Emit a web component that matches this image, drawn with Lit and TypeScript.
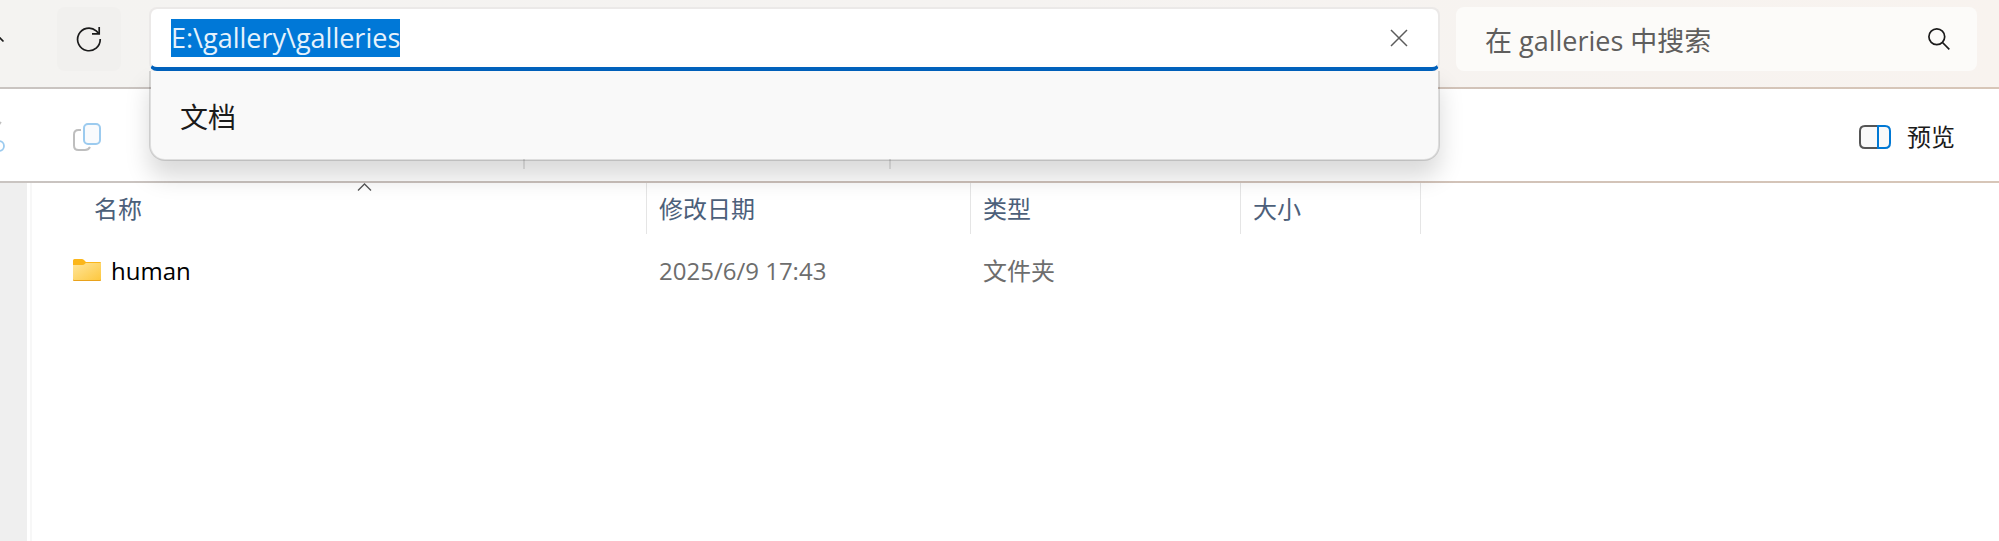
import { LitElement, html, css } from "lit";
import { customElement, property, query } from "lit/decorators.js";

interface FileEntry {
  name: string;
  modified: string;
  type: string;
  size: string;
}

const baseStyles = css`
  * {
    box-sizing: border-box;
  }
  button,
  input {
    font: inherit;
    color: inherit;
    border: 0;
    margin: 0;
    padding: 0;
    background: none;
  }
  svg {
    display: block;
    flex: none;
  }
`;

@customElement("address-box")
class AddressBox extends LitElement {
  @property() path = "";
  @property({ attribute: false }) suggestions: string[] = [];
  @query("input") input!: HTMLInputElement;

  static styles = [
    baseStyles,
    css`
      :host {
        display: block;
        position: relative;
        height: 64px;
      }
      .field {
        display: flex;
        align-items: center;
        height: 64px;
        padding: 0 30px 0 20px;
        border: 2px solid #ebe9e8;
        border-bottom: 4px solid #0062bd;
        border-radius: 8px;
        background: #fff;
        background-clip: padding-box;
      }
      .field input {
        flex: 1;
        min-width: 0;
        height: 38px;
        outline: none;
        caret-color: transparent;
        color: #1b1b1b;
      }
      .field input::selection {
        background: #0078d7;
        color: #e6f2fc;
      }
      .clear {
        color: #5c5c5c;
      }
      .menu {
        position: absolute;
        top: 64px;
        left: 0;
        right: 0;
        margin: 0;
        padding: 0;
        list-style: none;
        background: #f9f9f9;
        background-clip: padding-box;
        border: 2px solid rgba(0, 0, 0, 0.13);
        border-top: 0;
        border-radius: 0 0 16px 16px;
        box-shadow: 0 16px 24px rgba(0, 0, 0, 0.15);
      }
      .menu button {
        display: block;
        width: 100%;
        height: 88px;
        padding: 4px 28px 0 29px;
        text-align: left;
        color: #1b1b1b;
        font-size: 28px;
      }
    `,
  ];

  firstUpdated() {
    this.input.focus();
    this.input.select();
  }

  private clear() {
    this.input.value = "";
    this.input.focus();
  }

  render() {
    return html`
      <div class="field">
        <input type="text" aria-label="地址" spellcheck="false" .value=${this.path} />
        <button class="clear" aria-label="清除" @click=${this.clear}>
          <svg width="18" height="18" viewBox="0 0 18 18" fill="none" stroke="currentColor" stroke-width="1.5">
            <path d="M1 1 17 17M17 1 1 17" />
          </svg>
        </button>
      </div>
      <ul class="menu">
        ${this.suggestions.map((s) => html`<li><button>${s}</button></li>`)}
      </ul>
    `;
  }
}

@customElement("file-list")
class FileList extends LitElement {
  @property({ attribute: false }) files: FileEntry[] = [];

  static styles = [
    baseStyles,
    css`
      :host {
        display: block;
        font-size: 24px;
        line-height: 32px;
      }
      table {
        table-layout: fixed;
        border-collapse: separate;
        border-spacing: 0;
        width: 1389px;
      }
      .name {
        width: 615px;
      }
      .date {
        width: 324px;
      }
      .type {
        width: 270px;
      }
      .size {
        width: 180px;
      }
      th {
        position: relative;
        height: 51px;
        padding: 0 12px;
        text-align: left;
        font-weight: inherit;
        color: #4c607a;
        border-right: 1px solid #e5e5e5;
      }
      th:first-child {
        padding-left: 62px;
      }
      .sort {
        position: absolute;
        top: 0;
        left: 325px;
      }
      td {
        height: 74px;
        padding: 0 12px;
        color: #6d6d6d;
      }
      td:first-child {
        padding-left: 41px;
      }
      .entry {
        display: flex;
        align-items: center;
        gap: 10px;
        color: #000;
      }
    `,
  ];

  render() {
    return html`
      <table>
        <thead>
          <tr>
            <th class="name" aria-sort="ascending">
              名称
              <svg class="sort" width="15" height="9" viewBox="0 0 15 9" fill="none" stroke="#555" stroke-width="1.3">
                <path d="M1 7.5 7.5 1 14 7.5" />
              </svg>
            </th>
            <th class="date">修改日期</th>
            <th class="type">类型</th>
            <th class="size">大小</th>
          </tr>
        </thead>
        <tbody>
          ${this.files.map(
            (f) => html`<tr>
              <td>
                <div class="entry">
                  <svg width="28" height="24" viewBox="0 0 28 24">
                    <defs>
                      <linearGradient id="front" x1="0" y1="0" x2="1" y2="1">
                        <stop offset="0" stop-color="#ffe59a" />
                        <stop offset="1" stop-color="#fdc73c" />
                      </linearGradient>
                    </defs>
                    <path d="M0 1.5Q0 0 1.5 0H9Q10.500 0 11.500 1.500L13 3H27Q28 3 28 4V8H0Z" fill="#fbb61a" />
                    <path d="M0 6H9.500Q10.800 6 11.800 5L12.800 4H28V20.800Q28 22 26.800 22H1.200Q0 22 0 20.800Z" fill="url(#front)" />
                    <path d="M0 20.500Q0 22 1.200 22H26.800Q28 22 28 20.500L27 21H1Z" fill="#e9a21c" />
                  </svg>
                  <span>${f.name}</span>
                </div>
              </td>
              <td>${f.modified}</td>
              <td>${f.type}</td>
              <td>${f.size}</td>
            </tr>`
          )}
        </tbody>
      </table>
    `;
  }
}

@customElement("app-root")
class AppRoot extends LitElement {
  static styles = [
    baseStyles,
    css`
      :host {
        display: flex;
        flex-direction: column;
        min-height: 100vh;
        overflow: hidden;
        background: #fff;
        color: #1b1b1b;
        font-family: "Open Sans", "Noto Sans CJK SC", sans-serif;
        font-size: 27px;
        line-height: 38px;
      }
      .top {
        position: relative;
        z-index: 1;
        display: flex;
        padding: 7px 22px 16px 0;
        background: linear-gradient(90deg, #f4f3f1, #f5f3f1 50%, #f8f3ef);
      }
      .rule {
        flex: none;
        height: 2px;
        background: linear-gradient(90deg, #c9c4c1, #cdc0b9 50%, #d7c6b8);
      }
      .up {
        display: flex;
        align-items: center;
        width: 57px;
      }
      .refresh {
        display: flex;
        align-items: center;
        justify-content: center;
        width: 64px;
        height: 64px;
        border-radius: 8px;
        background: #f1f0ee;
      }
      address-box {
        flex: 1;
        min-width: 0;
        margin: 0 16px 0 28px;
      }
      .search {
        display: flex;
        align-items: center;
        width: 521px;
        height: 64px;
        padding: 0 27px 0 29px;
        border-radius: 8px;
        background: #fcfbf9;
      }
      .search input {
        flex: 1;
        min-width: 0;
        height: 40px;
        padding-top: 2px;
        outline: none;
      }
      .search input::placeholder {
        color: #5f5e5d;
        opacity: 1;
      }
      .commands {
        display: flex;
        align-items: center;
        height: 92px;
        padding: 4px 44px 0 0;
        font-size: 24px;
      }
      .group {
        display: flex;
        align-items: center;
      }
      .edit {
        width: 523px;
        gap: 67px;
      }
      .sort {
        width: 364px;
      }
      .divider {
        width: 2px;
        height: 64px;
        background: #e5e5e5;
      }
      .preview {
        display: flex;
        align-items: center;
        gap: 16px;
        margin-left: auto;
      }
      .body {
        display: flex;
        flex: 1;
      }
      .tree {
        width: 27px;
        background: #efefef;
      }
      file-list {
        flex: 1;
        min-width: 0;
        margin-left: 3px;
        border-left: 2px solid #f7f7f7;
      }
    `,
  ];

  private files: FileEntry[] = [
    { name: "human", modified: "2025/6/9 17:43", type: "文件夹", size: "" },
  ];

  render() {
    return html`
      <header class="top">
        <button class="up" aria-label="向上">
          <svg width="5" height="10" viewBox="0 0 5 10" fill="none" stroke="#1b1b1b" stroke-width="1.700">
            <path d="M-5 -1 3.500 7.500" />
          </svg>
        </button>
        <button class="refresh" aria-label="刷新">
          <svg width="26" height="26" viewBox="0 0 26 26" fill="none" stroke="#1b1b1b" stroke-width="1.700">
            <path d="M24.200 13A11.300 11.300 0 1 1 20.200 4.800L23 7.600" />
            <path d="M23.200 1V7.800H16" />
          </svg>
        </button>
        <address-box .path=${"E:\\gallery\\galleries"} .suggestions=${["文档"]}></address-box>
        <label class="search">
          <input type="search" aria-label="搜索" placeholder="在 galleries 中搜索" />
          <svg width="22" height="22" viewBox="0 0 22 22" fill="none" stroke="#1b1b1b" stroke-width="1.700">
            <circle cx="8.800" cy="8.800" r="7.900" />
            <path d="M14.500 14.500 21.300 21.300" />
          </svg>
        </label>
      </header>
      <div class="rule"></div>
      <div class="commands">
        <div class="group edit">
          <button aria-label="剪切">
            <svg width="6" height="36" viewBox="0 0 6 36" fill="none" stroke-width="1.800">
              <path d="M-3 8 1 3" stroke="#c0c0c0" />
              <circle cx="-1" cy="27" r="5" stroke="#9ccbef" />
            </svg>
          </button>
          <button aria-label="复制">
            <svg width="28" height="28" viewBox="0 0 28 28" fill="none" stroke-width="2">
              <path d="M8 7H5.500Q1 7 1 11.500V22.500Q1 27 5.500 27H12Q15.500 27 17 24" stroke="#bebebe" />
              <rect x="11" y="1" width="16" height="20" rx="4" stroke="#9ccbef" fill="#f9fbfd" />
            </svg>
          </button>
        </div>
        <div class="divider"></div>
        <div class="group sort"></div>
        <div class="divider"></div>
        <button class="preview">
          <svg width="32" height="24" viewBox="0 0 32 24" fill="#f9f9f9" stroke-width="2">
            <path d="M19 1H6Q1 1 1 6V18Q1 23 6 23H19" stroke="#555" />
            <path d="M19 1H26Q31 1 31 6V18Q31 23 26 23H19Z" stroke="#0078d4" />
          </svg>
          <span>预览</span>
        </button>
      </div>
      <div class="rule"></div>
      <main class="body">
        <div class="tree"></div>
        <file-list .files=${this.files}></file-list>
      </main>
    `;
  }
}
